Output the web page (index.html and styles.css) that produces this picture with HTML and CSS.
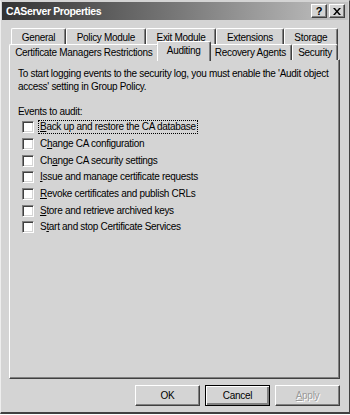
FILE: index.html
```html
<!DOCTYPE html>
<html lang="en">
  <head>
    <meta charset="UTF-8" />
    <title>CAServer Properties</title>
    <link rel="stylesheet" href="styles.css">
  </head>
  <body>
    <div class="window">
      <div class="titlebar">
        <span class="title">CAServer Properties</span>
        <div class="caption-buttons">
          <div class="cap-btn">?</div>
          <div class="cap-btn close">
            <svg width="8" height="7" viewBox="0 0 8 7">
              <path d="M0 0h2l2 2.5L6 0h2L5 3.5 8 7H6L4 4.5 2 7H0l3-3.5z" fill="#000" />
            </svg>
          </div>
        </div>
      </div>

      <div class="tabs">
        <div class="tab-row back">
          <div class="tab">General</div>
          <div class="tab">Policy Module</div>
          <div class="tab">Exit Module</div>
          <div class="tab">Extensions</div>
          <div class="tab">Storage</div>
        </div>
        <div class="tab-row front">
          <div class="tab">Certificate Managers Restrictions</div>
          <div class="tab selected">Auditing</div>
          <div class="tab">Recovery Agents</div>
          <div class="tab">Security</div>
        </div>
      </div>

      <div class="panel">
        <p class="intro">To start logging events to the security log, you must enable the 'Audit object access' setting in Group Policy.</p>
        <p class="label">Events to audit:</p>
        <ul class="events">
          <li><span class="box"></span><span class="text focus"><u>B</u>ack up and restore the CA database</span></li>
          <li><span class="box"></span><span class="text">C<u>h</u>ange CA configuration</span></li>
          <li><span class="box"></span><span class="text">Ch<u>a</u>nge CA security settings</span></li>
          <li><span class="box"></span><span class="text"><u>I</u>ssue and manage certificate requests</span></li>
          <li><span class="box"></span><span class="text"><u>R</u>evoke certificates and publish CRLs</span></li>
          <li><span class="box"></span><span class="text"><u>S</u>tore and retrieve archived keys</span></li>
          <li><span class="box"></span><span class="text">S<u>t</u>art and stop Certificate Services</span></li>
        </ul>
      </div>

      <div class="buttons">
        <button class="btn">OK</button>
        <button class="btn default">Cancel</button>
        <button class="btn disabled"><u>A</u>pply</button>
      </div>
    </div>
  </body>
</html>
```

FILE: styles.css
```css
* {
  box-sizing: border-box;
}

body {
  margin: 0;
  background: #fff;
  font-family: "Liberation Sans", Arial, sans-serif;
  font-size: 10px;
  letter-spacing: -0.3px;
  color: #000;
}

.window {
  width: 350px;
  height: 414px;
  background: #d4d4d4;
  border-top: 1px solid #d4d4d4;
  border-left: 1px solid #eeeeee;
  border-right: 1px solid #404040;
  border-bottom: 2px solid #404040;
  padding: 1px 1px 0 1px;
  display: flex;
  flex-direction: column;
}

.titlebar {
  height: 18px;
  background: linear-gradient(to right, #333, #777 50%, #c4c4c4);
  display: flex;
  align-items: center;
  justify-content: space-between;
  padding: 0 3px 0 4px;
}

.title {
  color: #fff;
  font-weight: bold;
  font-size: 10.5px;
  letter-spacing: -0.4px;
}

.caption-buttons {
  display: flex;
}

.cap-btn {
  width: 16px;
  height: 14px;
  background: #d4d4d4;
  border-top: 1px solid #fff;
  border-left: 1px solid #fff;
  border-right: 1px solid #404040;
  border-bottom: 1px solid #404040;
  box-shadow: inset -1px -1px 0 #808080;
  display: flex;
  align-items: center;
  justify-content: center;
  font-weight: bold;
  font-size: 11px;
  letter-spacing: 0;
  line-height: 1;
}

.cap-btn.close {
  margin-left: 2px;
}

.tabs {
  margin-top: 8px;
  display: flex;
  flex-direction: column;
}

.tab-row {
  display: flex;
}

.tab-row.back {
  height: 16px;
  margin: 0 10px 0 9px;
}

.tab-row.front {
  height: 15px;
  margin: 0 10px 0 7px;
  position: relative;
  z-index: 1;
}

.tab {
  flex: auto;
  text-align: center;
  height: 17px;
  padding-top: 3px;
  white-space: nowrap;
  border-top: 1px solid #fff;
  border-left: 1px solid #fff;
  border-right: 1px solid #404040;
  box-shadow: inset -1px 0 0 #808080;
  border-radius: 2px 2px 0 0;
  background: #d4d4d4;
}

.tab-row.front .tab {
  height: 16px;
  padding-top: 2px;
}

.tab-row.front .tab.selected {
  flex: none;
  width: 54px;
  height: 20px;
  margin: -3px -2px 0 -2px;
  padding-top: 3px;
  position: relative;
  z-index: 2;
}

.panel {
  margin: 0 8px 0 7px;
  height: 320px;
  border-top: 1px solid #fff;
  border-left: 1px solid #fff;
  border-right: 1px solid #404040;
  border-bottom: 1px solid #404040;
  box-shadow: inset -1px -1px 0 #808080;
  padding: 7px 8px;
}

.intro {
  margin: 0;
  line-height: 13px;
}

.label {
  margin: 12px 0 0 0;
  line-height: 13px;
}

.events {
  list-style: none;
  margin: 1px 0 0 4px;
  padding: 0;
}

.events li {
  display: flex;
  align-items: center;
  height: 16.7px;
  gap: 5px;
}

.box {
  width: 12px;
  height: 12px;
  background: #fff;
  border-top: 1px solid #808080;
  border-left: 1px solid #808080;
  border-right: 1px solid #fff;
  border-bottom: 1px solid #fff;
  box-shadow: inset 1px 1px 0 #404040, inset -1px -1px 0 #d4d4d4;
}

.text {
  padding: 0 1px;
  line-height: 12px;
}

.text.focus {
  outline: 1px dotted #000;
}

u {
  text-decoration: underline;
  text-underline-offset: 1px;
}

.buttons {
  display: flex;
  justify-content: flex-end;
  gap: 5px;
  margin: 6px 8px 0 0;
}

.btn {
  width: 65px;
  height: 21px;
  font-family: "Liberation Sans", Arial, sans-serif;
  font-size: 10px;
  letter-spacing: -0.3px;
  color: #000;
  background: #d4d4d4;
  border-top: 1px solid #fff;
  border-left: 1px solid #fff;
  border-right: 1px solid #404040;
  border-bottom: 1px solid #404040;
  box-shadow: inset -1px -1px 0 #808080;
  padding: 0;
}

.btn.default {
  border: 1px solid #000;
  box-shadow: inset 1px 1px 0 #fff, inset -2px -2px 0 #808080;
}

.btn.disabled {
  color: #9a9a9a;
  text-shadow: 1px 1px 0 #fff;
}
```
